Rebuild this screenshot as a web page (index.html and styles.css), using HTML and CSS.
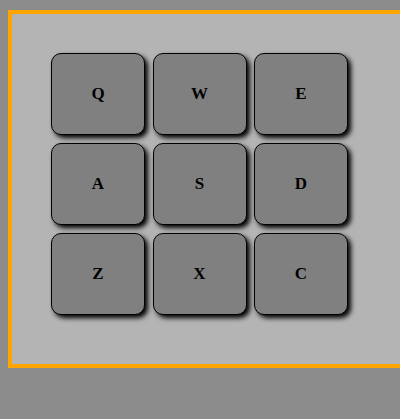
FILE: index.html
```html
<!DOCTYPE html>
<html>
<head>
<meta charset="utf-8">
<link rel="stylesheet" href="styles.css">
</head>
<body>
<div class="frame">
  <div class="pad">
    <button class="key">Q</button>
    <button class="key">W</button>
    <button class="key">E</button>
    <button class="key">A</button>
    <button class="key">S</button>
    <button class="key">D</button>
    <button class="key">Z</button>
    <button class="key">X</button>
    <button class="key">C</button>
  </div>
</div>
</body>
</html>
```
FILE: styles.css
```css
html, body {
  margin: 0;
  background: #8c8c8c;
}
body {
  padding: 10px 0 0 8px;
  height: 419px;
  box-sizing: border-box;
  overflow: hidden;
}
.frame {
  background: #b4b4b4;
  border: 4px solid #ffa500;
  border-right: none;
  padding: 39px 0 0 39px;
  box-sizing: border-box;
  height: 358px;
}
.pad {
  display: grid;
  grid-template-columns: repeat(3, 94px);
  grid-auto-rows: 82px;
  column-gap: 7.5px;
  row-gap: 8px;
}
.key {
  margin: 0;
  padding: 0;
  background: #808080;
  border: 1px solid #000;
  border-radius: 10px;
  box-shadow: 3px 3px 5px #000;
  font-family: "Liberation Serif", "Times New Roman", serif;
  font-weight: bold;
  font-size: 17px;
  color: #000;
}
```
